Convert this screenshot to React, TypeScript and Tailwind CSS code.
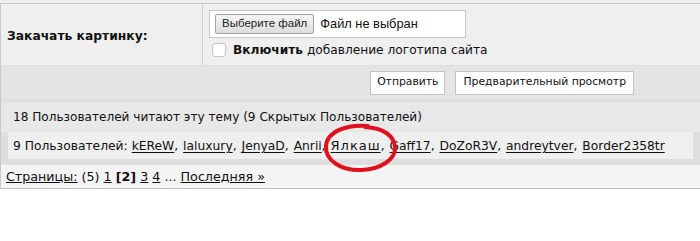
export default function App() {
  const users = ["kEReW", "laluxury", "JenyaD", "Anrii", "Ялкаш", "Gaff17", "DoZoR3V", "andreytver", "Border2358tr"]

  return (
    <div className="w-[700px] h-[241px] bg-white text-[12.3px] text-[#111] overflow-hidden" style={{ fontFamily: '"DejaVu Sans", Verdana, sans-serif' }}>
      <div className="h-[3px] bg-[#efefef]" />
      <div className="border-t border-[#c9c9c9] border-l border-l-[#c9c9c9]">
        {/* upload row */}
        <div className="flex h-[61px] bg-[#efefef]">
          <div className="w-[202px] border-r border-[#cfcfcf] flex items-center pl-[6px] pt-[4px] font-bold text-[12.3px]">
            Закачать картинку:
          </div>
          <div className="flex flex-col pl-[6px] pt-[6px]">
            <div className="w-[257px] h-[28px] bg-white border border-[#c8c8c8] flex items-center pl-[5px] gap-[6px]" style={{ fontFamily: '"Liberation Sans", Arial, sans-serif' }}>
              <span className="h-[20px] px-[6px] flex items-center rounded-[2px] border border-[#a3a3a3] bg-gradient-to-b from-[#f6f6f6] to-[#dddddd] text-[11.5px] text-[#222]">
                Выберите файл
              </span>
              <span className="text-[12.8px]">Файл не выбран</span>
            </div>
            <div className="flex items-center mt-[3px] ml-[3px] gap-[7px]">
              <span className="w-[14px] h-[14px] bg-white border border-[#c3c3c3] rounded-[3px]" />
              <span className="text-[12.2px]">
                <b>Включить</b> добавление логотипа сайта
              </span>
            </div>
          </div>
        </div>

        {/* buttons row */}
        <div className="flex h-[34px] items-center justify-end gap-[10px] pr-[66px] bg-[#e4e4e4] border-t border-[#e0e0e0]">
          <span className="h-[24px] px-[6px] flex items-center bg-white border border-[#c2c2c2] text-[10.8px]">Отправить</span>
          <span className="h-[24px] px-[7px] flex items-center bg-white border border-[#c2c2c2] text-[10.8px]">Предварительный просмотр</span>
        </div>

        {/* who's reading */}
        <div className="bg-[#dedede] px-[7px] pt-[3px] pb-[6px]">
          <div className="h-[30px] flex items-center bg-[#e8e8e8] -mx-[7px] px-[12px] text-[12.1px]">
            18 Пользователей читают эту тему (9 Скрытых Пользователей)
          </div>
          <div className="relative h-[27px] leading-[27px] pl-[5px] bg-[#efefef] whitespace-nowrap">
            9 Пользователей:{" "}
            {users.map((u, i) => (
              <span key={u}>
                <a className={`underline decoration-[1px] underline-offset-[2px] text-[#111] ${u === "Ялкаш" ? "text-[13px] tracking-[1px]" : ""}`}>{u}</a>
                {i < users.length - 1 ? <span className="mr-[1px]">, </span> : null}
              </span>
            ))}
            <svg className="absolute left-[314px] top-[-10px] pointer-events-none" width="78" height="52" viewBox="0 0 78 52">
              <path
                d="M46 4 C26 2 5 9 4 24 C3 39 20 49 40 48 C58 47 74 38 73 25 C72 14 62 6 43 5"
                fill="none"
                stroke="#e0101c"
                strokeWidth="4"
                strokeLinecap="round"
              />
            </svg>
          </div>
        </div>

        {/* pagination */}
        <div className="h-[24px] bg-[#f4f4f4] border-b border-[#bdbdbd] leading-[23px] pl-[5px] text-[12.7px] whitespace-nowrap">
          <a className="underline">Страницы:</a> (5) <a className="underline">1</a> <b>[2]</b>{" "}
          <a className="underline">3</a> <a className="underline">4</a> ... <a className="underline">Последняя »</a>
        </div>
      </div>
    </div>
  )
}
